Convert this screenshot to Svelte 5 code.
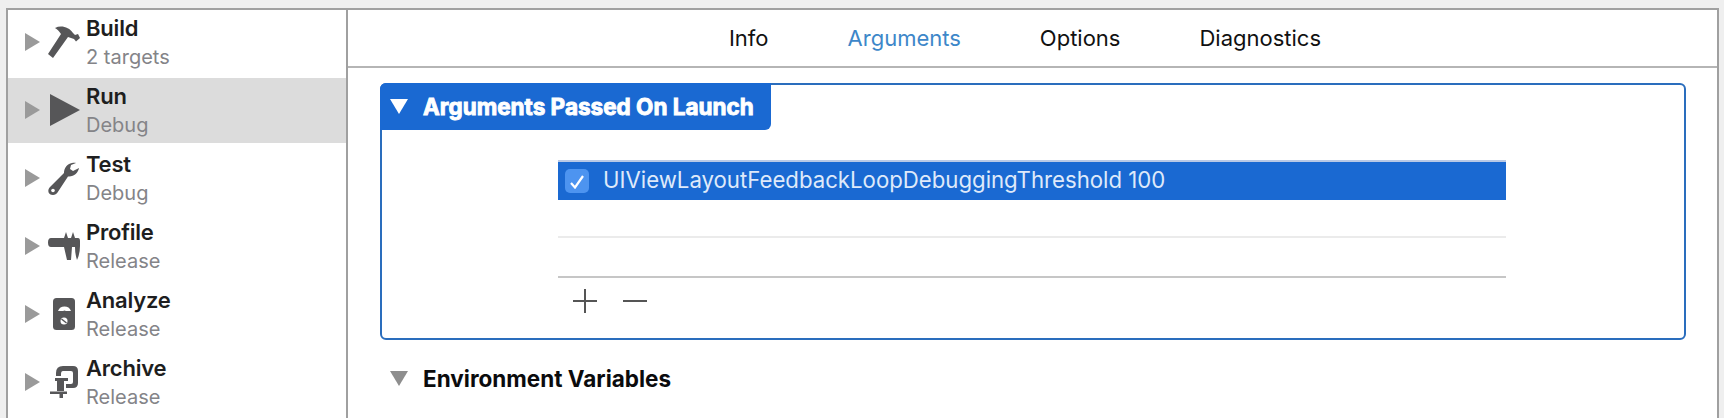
<script>
	const schemes = [
		{ name: 'Build', sub: '2 targets', icon: 'build' },
		{ name: 'Run', sub: 'Debug', icon: 'run', selected: true },
		{ name: 'Test', sub: 'Debug', icon: 'test' },
		{ name: 'Profile', sub: 'Release', icon: 'profile' },
		{ name: 'Analyze', sub: 'Release', icon: 'analyze' },
		{ name: 'Archive', sub: 'Release', icon: 'archive' }
	];

	const tabs = ['Info', 'Arguments', 'Options', 'Diagnostics'];
	const active = 'Arguments';
</script>

<div class="window">
	<aside class="sidebar">
		{#each schemes as s}
			<div class="row" class:selected={s.selected}>
				<svg class="disclosure" width="15" height="18" viewBox="0 0 15 18"><path d="M0 0 L15 9 L0 18 Z" /></svg>
				<svg class="icon" width="36" height="36" viewBox="0 0 36 36">
					{#if s.icon === 'build'}
						<path d="M1 28 L14 8 C12 5 10 3 8 2 C14 -1 22 1 26 7 L28 9 L31 8 L33 12 L29 15.5 L27 13 L21 11 L6 32 Z" />
					{:else if s.icon === 'run'}
						<path d="M3 0 L33 16 L3 32 Z" />
					{:else if s.icon === 'test'}
						<path d="M25 1 C20 2 17 6 17 11 L3 25 C0 28 1 33 6 33 C8 33 9.5 32 10.5 30.5 L21 14.5 C27 15 31 11 32 6 L26 9 L23 7 L24 3 L29 1 C28 0.5 26.5 0.5 25 1 Z" />
						<circle class="knock" cx="6" cy="28.5" r="1.800" />
					{:else if s.icon === 'profile'}
						<path d="M4 8 L17 8 L19 2 L21 8 L24 8 L26 2 L28 8 L31 8 Q33 8 33 11 L33 16 Q33 24 30 30 Q28 24 28 17 L25 17 L24 30 L20 30 L17 17 L4 17 Q1 17 1 12.5 Q1 8 4 8 Z" />
					{:else if s.icon === 'analyze'}
						<rect x="6" y="0" width="22" height="32" rx="3.500" />
						<path class="knock" d="M11 13 A7 7 0 0 1 24 13 L19 13 A3 3 0 0 0 16 13 Z" />
						<circle class="knock" cx="17" cy="23" r="3.500" />
						<path d="M14.500 21 L19.500 25" stroke="#565658" stroke-width="1.500" />
					{:else}
						<path d="M9 7 Q9 0 16 0 L26 0 Q31 0 31 5 L31 17 Q31 22 26 22 L19 22 L19 18 L24 18 Q26 18 26 16 L26 7 Q26 5 24 5 L16 5 Q14 5 14 8 L14 10 L9 10 Z" />
						<path d="M8 12 L21 12 L21 15 L17 15 L17 25 L10 25 L10 15 L8 15 Z" />
						<path d="M3 25.5 L20 25.5 L20 28 L16 28 L16 32 L12.500 32 L12.500 28 L3 28 Z" />
					{/if}
				</svg>
				<div class="labels">
					<span class="name">{s.name}</span>
					<span class="sub">{s.sub}</span>
				</div>
			</div>
		{/each}
	</aside>

	<main class="main">
		<nav class="tabs">
			{#each tabs as t}
				<span class="tab" class:active={t === active}>{t}</span>
			{/each}
		</nav>

		<section class="panel">
			<header class="panel-head">
				<svg width="18" height="15" viewBox="0 0 18 15"><path d="M0 0 L18 0 L9 15 Z" fill="#fff" /></svg>
				<span>Arguments Passed On Launch</span>
			</header>

			<div class="table">
				<div class="arg">
					<span class="check">
						<svg width="16" height="15" viewBox="0 0 16 15"><path d="M2 9 L6 13.500 L14 2" fill="none" stroke="#fff" stroke-width="2.200" /></svg>
					</span>
					<span class="arg-text">UIViewLayoutFeedbackLoopDebuggingThreshold 100</span>
				</div>
				<div class="blank"></div>
				<div class="blank last"></div>
				<div class="tools">
					<svg width="24" height="24" viewBox="0 0 24 24"><path d="M0 12 L24 12 M12 0 L12 24" stroke="#555" stroke-width="2" /></svg>
					<svg width="24" height="24" viewBox="0 0 24 24"><path d="M0 12 L24 12" stroke="#555" stroke-width="2" /></svg>
				</div>
			</div>
		</section>

		<div class="env">
			<svg width="18" height="15" viewBox="0 0 18 15"><path d="M0 0 L18 0 L9 15 Z" fill="#8e8e8e" /></svg>
			<span>Environment Variables</span>
		</div>
	</main>
</div>

<style>
	:global(body) {
		margin: 0;
		background: #efefef;
		overflow: hidden;
	}

	.window {
		box-sizing: border-box;
		display: flex;
		width: 1713px;
		height: 410px;
		margin: 8px 0 0 6px;
		background: #fff;
		border: 2px solid #a0a0a0;
		border-bottom: 0;
		font-family: Inter, "Liberation Sans", sans-serif;
	}

	.sidebar {
		flex: none;
		width: 338px;
		border-right: 2px solid #a0a0a0;
	}

	.row {
		display: flex;
		align-items: center;
		height: 68px;
		padding-left: 17px;
		box-sizing: border-box;
	}

	.row.selected {
		background: linear-gradient(#dcdcdc, #dcdcdc) no-repeat top / 100% 65px;
	}

	.disclosure {
		flex: none;
		fill: #9a9a9a;
		margin: -4px 7px 0 0;
	}

	.icon {
		flex: none;
		fill: #565658;
		margin-right: 3px;
	}

	.icon .knock {
		fill: #fff;
	}

	.labels {
		display: flex;
		flex-direction: column;
		gap: 3px;
		margin-top: -4px;
	}

	.name {
		font-size: 22px;
		line-height: 26px;
		font-weight: 600;
		color: #1e1e20;
		letter-spacing: -0.2px;
	}

	.sub {
		font-size: 20px;
		line-height: 26px;
		color: #848488;
	}

	.main {
		flex: 1;
		min-width: 0;
	}

	.tabs {
		display: flex;
		justify-content: center;
		align-items: center;
		gap: 79px;
		height: 56px;
		padding-right: 15px;
		border-bottom: 2px solid #b5b5b5;
		font-size: 22px;
		color: #111;
	}

	.tab.active {
		color: #3d87c9;
	}

	.panel {
		box-sizing: border-box;
		height: 257px;
		margin: 15px 31px 0 32px;
		border: 2px solid #2a6dbd;
		border-radius: 6px;
	}

	.panel-head {
		display: flex;
		align-items: center;
		gap: 15px;
		box-sizing: border-box;
		width: 391px;
		height: 47px;
		margin: -2px 0 0 -2px;
		padding-left: 10px;
		background: #1a69d2;
		border-radius: 6px 0 6px 0;
		color: #fff;
		font-size: 22.500px;
		font-weight: 700;
		-webkit-text-stroke: 0.9px #fff;
	}

	.table {
		width: 948px;
		margin: 30px 0 0 176px;
	}

	.arg {
		display: flex;
		align-items: center;
		gap: 14px;
		box-sizing: border-box;
		height: 40px;
		padding-left: 7px;
		background: #1a69d2;
		border-top: 2px solid #b9c9e6;
		color: #dfe9fa;
		font-size: 22.200px;
	}

	.arg-text {
		padding-bottom: 4px;
	}

	.check {
		display: flex;
		align-items: center;
		justify-content: center;
		width: 24px;
		height: 24px;
		background: #4d94f0;
		border-radius: 5px;
	}

	.blank {
		box-sizing: border-box;
		height: 38px;
		border-bottom: 2px solid #ebebeb;
	}

	.blank.last {
		height: 40px;
		border-bottom-color: #c6c6c6;
	}

	.tools {
		display: flex;
		gap: 26px;
		padding: 11px 0 0 15px;
	}

	.env {
		display: flex;
		align-items: center;
		gap: 15px;
		margin: 25px 0 0 42px;
		font-size: 22.500px;
		font-weight: 700;
		color: #0b0b0d;
	}
</style>
